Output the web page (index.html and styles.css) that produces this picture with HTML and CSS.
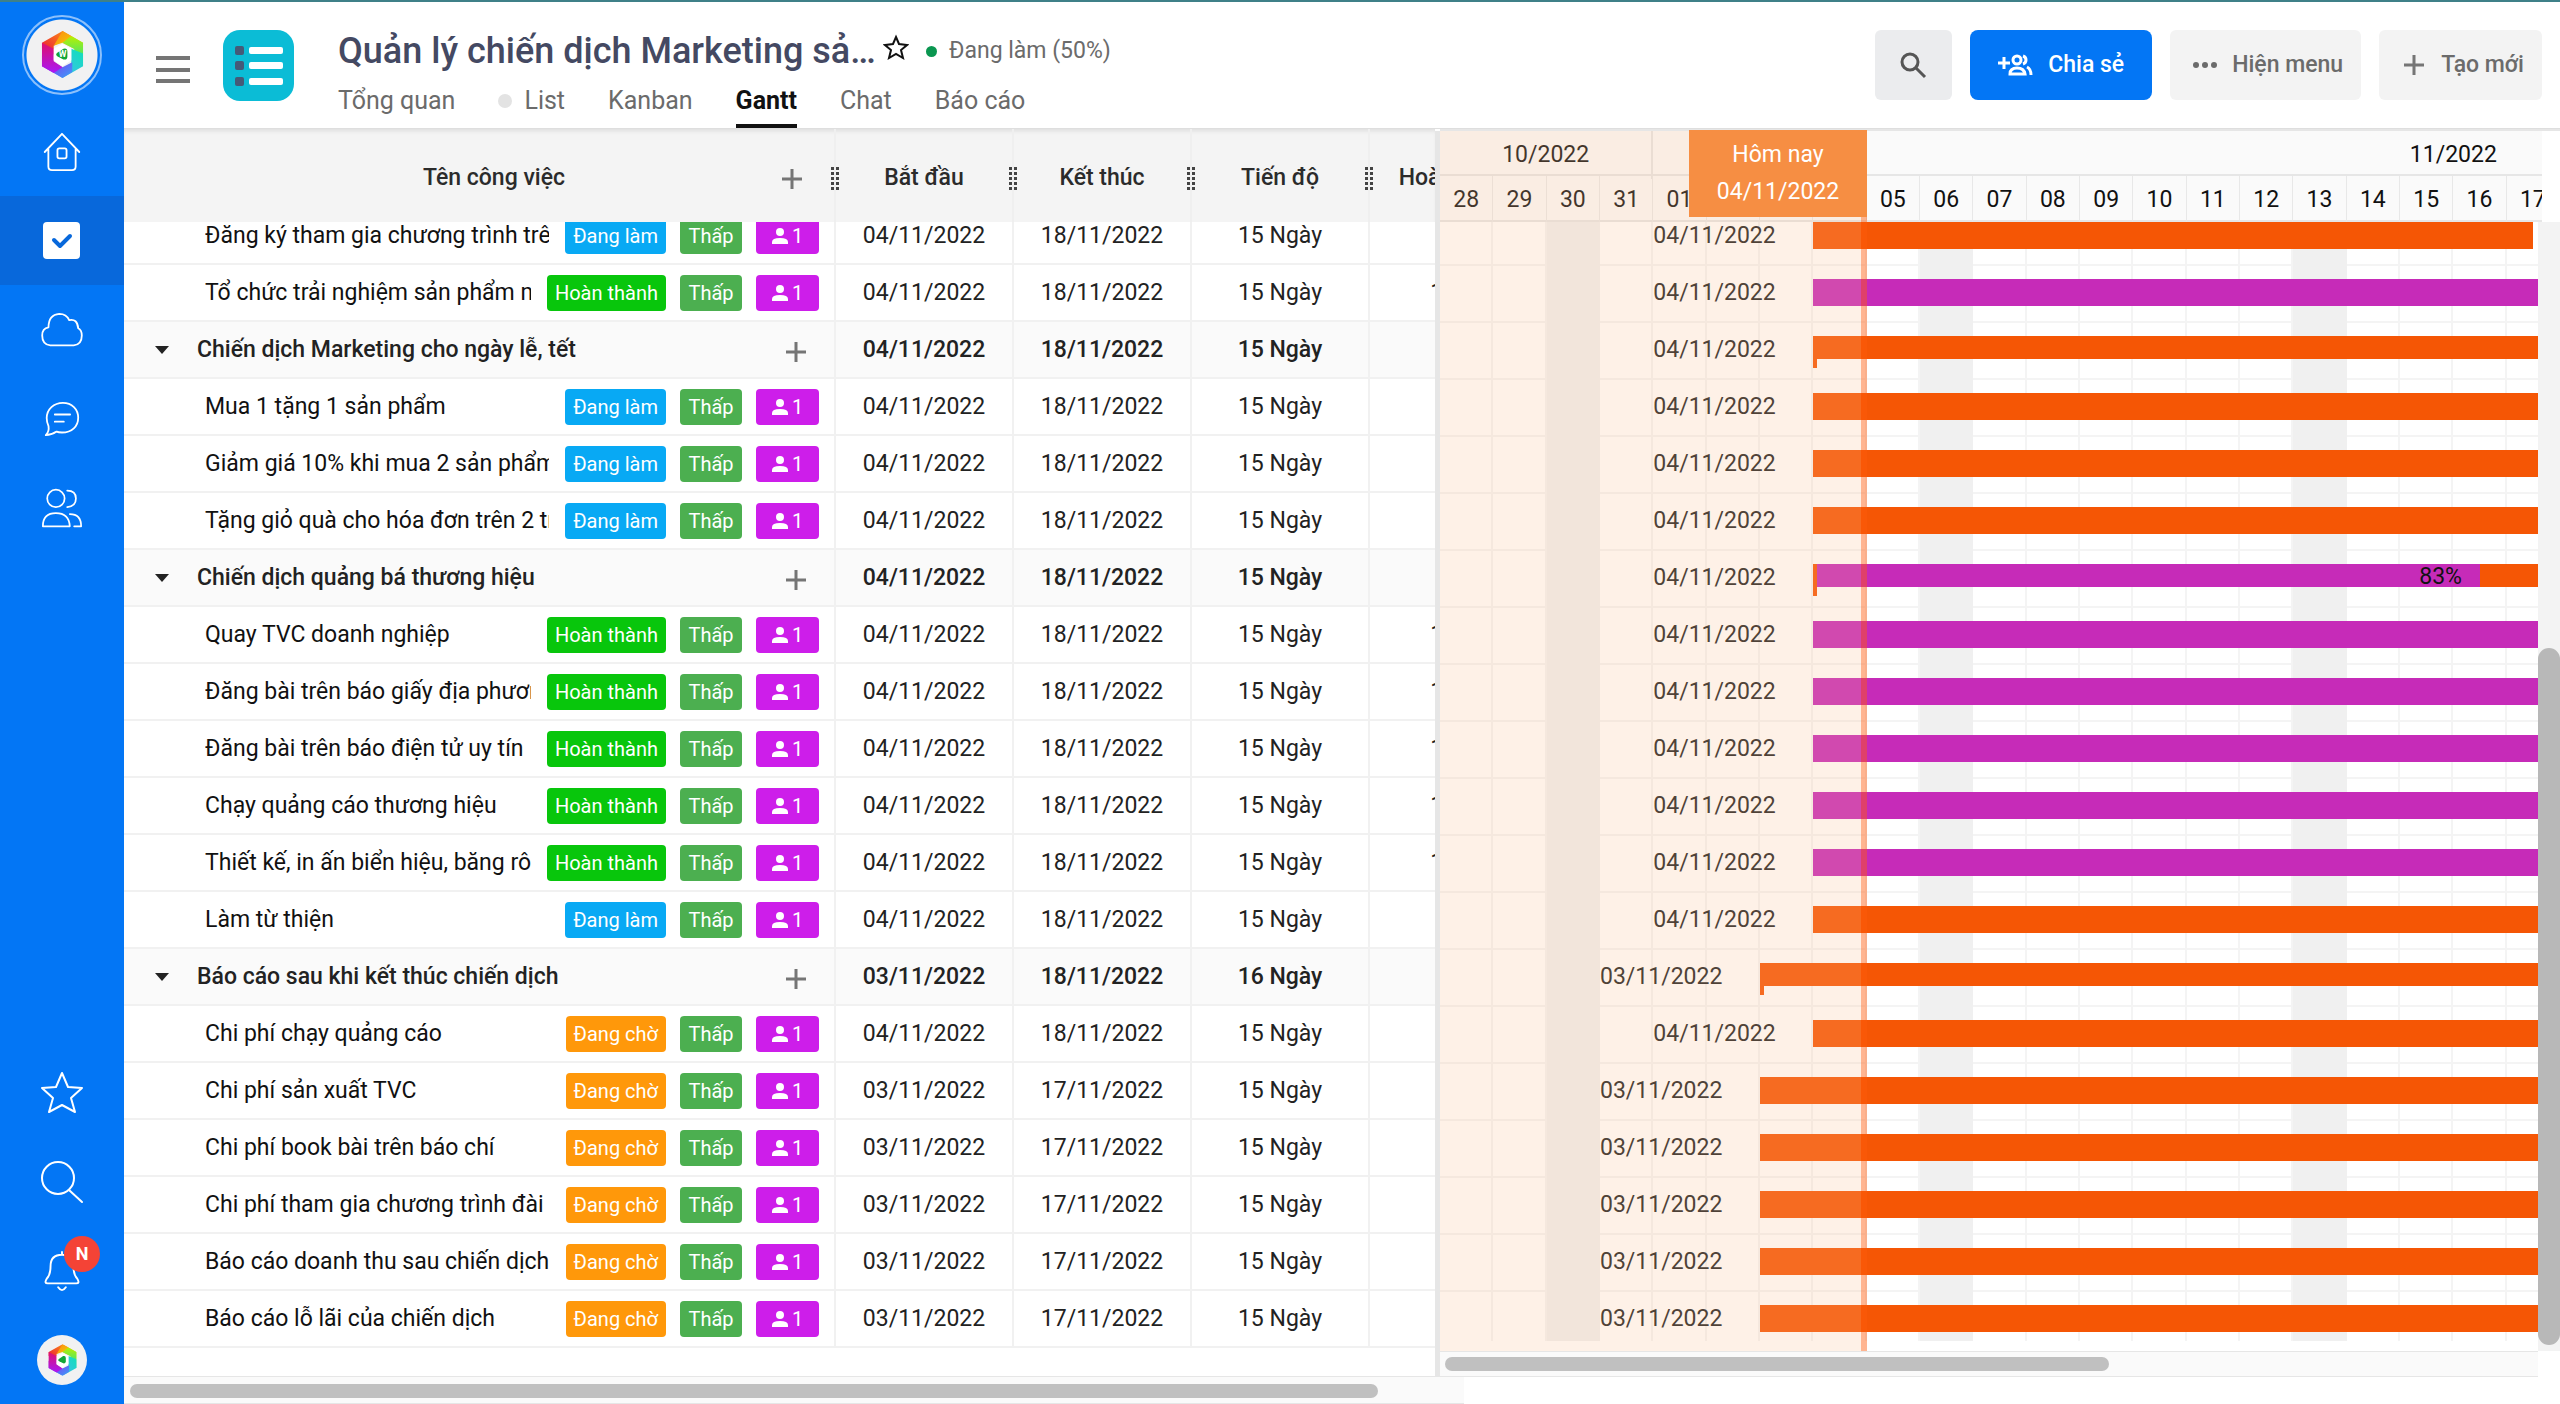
FILE: index.html
```html
<!DOCTYPE html>
<html lang="vi">
<head>
<meta charset="utf-8">
<title>Quản lý chiến dịch Marketing - Gantt</title>
<meta name="viewport" content="width=device-width, initial-scale=1">
<link rel="stylesheet" href="styles.css">
</head>
<body>
<svg class="sprite" aria-hidden="true">
  <defs>
    <linearGradient id="g1" x1="0" y1="1" x2="1" y2="0"><stop offset="0" stop-color="#e8123a"/><stop offset="1" stop-color="#ff9a10"/></linearGradient>
    <linearGradient id="g2" x1="0" y1="0" x2="1" y2="1"><stop offset="0" stop-color="#ff8a10"/><stop offset="1" stop-color="#e6f000"/></linearGradient>
    <linearGradient id="g3" x1="0" y1="0" x2="0" y2="1"><stop offset="0" stop-color="#b8f000"/><stop offset="1" stop-color="#14e0a0"/></linearGradient>
    <linearGradient id="g4" x1="1" y1="0" x2="0" y2="1"><stop offset="0" stop-color="#10e0b8"/><stop offset="1" stop-color="#48b8f8"/></linearGradient>
    <linearGradient id="g5" x1="1" y1="1" x2="0" y2="0"><stop offset="0" stop-color="#38a0f8"/><stop offset="1" stop-color="#a010f0"/></linearGradient>
    <linearGradient id="g6" x1="0" y1="1" x2="0" y2="0"><stop offset="0" stop-color="#a818f8"/><stop offset="1" stop-color="#e0106a"/></linearGradient>
  </defs>
  <symbol id="i-logo" viewBox="0 0 44 48">
    <path fill="url(#g1)" d="M1 12 22 0l9 5-18 10v9L1 18z"/>
    <path fill="url(#g2)" d="M22 0l21 12v11L22 12l-9 3z"/>
    <path fill="url(#g3)" d="M43 12v24l-9-5V18L22 12l9-7z"/>
    <path fill="url(#g4)" d="M43 23v13L22 48l-8-5 17-10V18z"/>
    <path fill="url(#g5)" d="M22 48 1 36V25l21 12 10-5v10z"/>
    <path fill="url(#g6)" d="M1 36V12l12 6v13l9 6-9 6z"/>
    <path fill="#fff" d="M22 13l9 5v12l-9 6-9-6V18z"/>
    <path fill="#12a637" d="M17 22l6-4q4-1 4 3v5q0 4-4 3l-6-3q-3-2 0-4z"/>
  </symbol>
  <symbol id="i-home" viewBox="0 0 42 44"><path d="M2 22 21 2l19 20M6 19v19q0 4 4 4h22q4 0 4-4V19"/><rect x="16" y="18" width="10" height="11" rx="2"/></symbol>
  <symbol id="i-cloud" viewBox="0 0 48 40"><path d="M11 37q-9-1-9-11 0-8 7-9 0-14 12-15 8 0 11 7 9-2 10 9 4 2 4 8 0 10-9 11z"/></symbol>
  <symbol id="i-chat" viewBox="0 0 40 40"><path d="M21 2C31 2 38 9 38 18.500S31 35 20 35q-4 0-6-1-6 4-12 4 4-4 3-10-2-4-2-9C3 9 11 2 21 2zM12 15h17M12 23h10"/></symbol>
  <symbol id="i-people" viewBox="0 0 48 46"><circle cx="17" cy="12" r="10"/><path d="M30 3q10 0 10 9t-10 10M2 44q0-15 15-15t16 15zM33 30q13 0 13 14h-8"/></symbol>
  <symbol id="i-starline" viewBox="0 0 44 44"><path d="M22 2l6 14 14 1-11 10 4 14-13-7-13 7 4-14L2 17l14-1z"/></symbol>
  <symbol id="i-search" viewBox="0 0 44 44"><circle cx="18" cy="18" r="16"/><path d="M29 30l13 12"/></symbol>
  <symbol id="i-bell" viewBox="0 0 38 44"><path d="M19 2v3M19 5q12 0 12 12 0 9 4 13 3 5-1 5H4q-4 0-1-5 4-4 4-13Q7 5 19 5zM15 39q4 6 8 0"/></symbol>
  <symbol id="i-person" viewBox="0 0 16 16"><circle cx="8" cy="4" r="4"/><path d="M0 16v-2q0-4 8-4t8 4v2z"/></symbol>
  <symbol id="i-plus" viewBox="0 0 20 20"><path d="M10 0v20M0 10h20"/></symbol>
  <symbol id="i-grip" viewBox="0 0 8 23"><path d="M0 1.500h3m2 0h3M0 6.500h3m2 0h3M0 11.500h3m2 0h3M0 16.500h3m2 0h3M0 21.500h3m2 0h3"/></symbol>
</svg>

<div class="app">
  <nav class="sidebar" aria-label="Chính">
    <div class="side-group">
      <a class="workspace" href="#" aria-label="Không gian làm việc"><span class="logo-disc"><svg class="logo" viewBox="0 0 44 48"><use href="#i-logo"/><text x="22" y="27" class="logo-letter" text-anchor="middle">W</text></svg></span></a>
      <a class="side-item" href="#" aria-label="Trang chủ"><svg class="line-icon" width="42" height="40"><use href="#i-home"/></svg></a>
      <a class="side-item active" href="#" aria-label="Công việc"><svg width="38" height="38" viewBox="0 0 38 38"><rect width="37" height="37" rx="4" fill="#fff"/><path d="M11 18l6 6 10-10" fill="none" stroke="#0868db" stroke-width="4" stroke-linecap="round" stroke-linejoin="round"/></svg></a>
      <a class="side-item" href="#" aria-label="Tài liệu"><svg class="line-icon" width="48" height="36"><use href="#i-cloud"/></svg></a>
      <a class="side-item" href="#" aria-label="Trò chuyện"><svg class="line-icon" width="40" height="36"><use href="#i-chat"/></svg></a>
      <a class="side-item" href="#" aria-label="Thành viên"><svg class="line-icon" width="48" height="40"><use href="#i-people"/></svg></a>
    </div>
    <div class="side-group">
      <a class="side-item" href="#" aria-label="Yêu thích"><svg class="line-icon" width="44" height="44"><use href="#i-starline"/></svg></a>
      <a class="side-item" href="#" aria-label="Tìm kiếm"><svg class="line-icon" width="44" height="44"><use href="#i-search"/></svg></a>
      <a class="side-item" href="#" aria-label="Thông báo"><svg class="line-icon" width="38" height="42"><use href="#i-bell"/></svg><span class="badge">N</span></a>
      <a class="side-item" href="#" aria-label="Tài khoản"><span class="logo-disc small"><svg class="logo" viewBox="0 0 44 48"><use href="#i-logo"/></svg></span></a>
    </div>
  </nav>

  <main class="main">
    <header class="topbar">
      <button class="menu-btn" type="button" aria-label="Menu"><svg width="34" height="28" viewBox="0 0 34 28" fill="#757575"><path d="M0 0h34v4H0zM0 12h34v4H0zM0 23h34v4H0z"/></svg></button>
      <svg class="project-icon" width="71" height="71" viewBox="0 0 71 71"><rect width="71" height="71" rx="17" fill="#0bbcd6"/><g fill="#455a78"><rect x="12" y="16" width="9" height="9" rx="2"/><rect x="12" y="31" width="9" height="9" rx="2"/><rect x="12" y="47" width="9" height="9" rx="2"/></g><g fill="#fff"><rect x="26" y="17" width="34" height="7" rx="2"/><rect x="26" y="32" width="34" height="7" rx="2"/><rect x="26" y="48" width="34" height="7" rx="2"/></g></svg>
      <div class="heading">
        <div class="title-row">
          <h1 class="title">Quản lý chiến dịch Marketing sản phẩm</h1>
          <button class="fav" type="button" aria-label="Đánh dấu"><svg width="26" height="26" viewBox="0 0 26 26" fill="none" stroke="#111" stroke-width="2"><path d="M13 3l3 7 8 1-6 5 2 8-7-4-7 4 2-8-6-5 8-1z"/></svg></button>
          <span class="status"><i class="status-dot"></i>Đang làm (50%)</span>
        </div>
        <nav class="tabs" aria-label="Chế độ xem">
          <a class="tab" href="#">Tổng quan</a>
          <a class="tab with-dot" href="#"><i class="tab-dot"></i>List</a>
          <a class="tab" href="#">Kanban</a>
          <a class="tab current" href="#" aria-current="page">Gantt</a>
          <a class="tab" href="#">Chat</a>
          <a class="tab" href="#">Báo cáo</a>
        </nav>
      </div>
      <div class="actions">
        <button class="btn btn-search" type="button" aria-label="Tìm"><svg width="27" height="27" viewBox="0 0 27 27" fill="none" stroke="#555" stroke-width="3"><circle cx="10" cy="10" r="8"/><path d="M16 16l9 9"/></svg></button>
        <button class="btn btn-primary" type="button"><svg width="35" height="22" viewBox="0 0 35 22" fill="none" stroke="#fff" stroke-width="3"><path d="M6 3v12M0 9h12"/><circle cx="19" cy="6" r="4"/><path d="M12 20q0-6 7-6t8 6zM25 2q3 1 3 4t-3 4M29 13q4 2 4 8"/></svg>Chia sẻ</button>
        <button class="btn" type="button"><svg width="24" height="6" viewBox="0 0 24 6" fill="#6b6b6b"><circle cx="3" cy="3" r="3"/><circle cx="12" cy="3" r="3"/><circle cx="21" cy="3" r="3"/></svg>Hiện menu</button>
        <button class="btn btn-new" type="button"><svg class="plus" width="20" height="20"><use href="#i-plus"/></svg>Tạo mới</button>
      </div>
    </header>

    <div class="gantt">
      <div class="grid-pane">
        <table class="tasks">
          <thead>
            <tr>
              <th class="name-head" scope="col"><span>Tên công việc</span><button class="add" type="button" aria-label="Thêm"><svg class="plus" width="20" height="20"><use href="#i-plus"/></svg></button><svg class="grip"><use href="#i-grip"/></svg></th>
              <th scope="col">Bắt đầu<svg class="grip"><use href="#i-grip"/></svg></th>
              <th scope="col">Kết thúc<svg class="grip"><use href="#i-grip"/></svg></th>
              <th scope="col">Tiến độ<svg class="grip"><use href="#i-grip"/></svg></th>
              <th scope="col">Hoàn thành</th>
            </tr>
          </thead>
          <tbody>
            <tr><td class="name"><span class="text">Đăng ký tham gia chương trình trên</span><span class="tag doing">Đang làm</span><span class="tag low">Thấp</span><span class="tag who"><svg width="16" height="16"><use href="#i-person"/></svg>1</span></td><td>04/11/2022</td><td>18/11/2022</td><td>15 Ngày</td><td></td></tr>
            <tr><td class="name"><span class="text">Tổ chức trải nghiệm sản phẩm mới</span><span class="tag done">Hoàn thành</span><span class="tag low">Thấp</span><span class="tag who"><svg width="16" height="16"><use href="#i-person"/></svg>1</span></td><td>04/11/2022</td><td>18/11/2022</td><td>15 Ngày</td><td>100%</td></tr>
            <tr class="group"><td class="name"><i class="caret"></i><span class="text">Chiến dịch Marketing cho ngày lễ, tết</span><button class="add" type="button" aria-label="Thêm"><svg class="plus" width="20" height="20"><use href="#i-plus"/></svg></button></td><td>04/11/2022</td><td>18/11/2022</td><td>15 Ngày</td><td></td></tr>
            <tr><td class="name"><span class="text">Mua 1 tặng 1 sản phẩm</span><span class="tag doing">Đang làm</span><span class="tag low">Thấp</span><span class="tag who"><svg width="16" height="16"><use href="#i-person"/></svg>1</span></td><td>04/11/2022</td><td>18/11/2022</td><td>15 Ngày</td><td></td></tr>
            <tr><td class="name"><span class="text">Giảm giá 10% khi mua 2 sản phẩm</span><span class="tag doing">Đang làm</span><span class="tag low">Thấp</span><span class="tag who"><svg width="16" height="16"><use href="#i-person"/></svg>1</span></td><td>04/11/2022</td><td>18/11/2022</td><td>15 Ngày</td><td></td></tr>
            <tr><td class="name"><span class="text">Tặng giỏ quà cho hóa đơn trên 2 triệu</span><span class="tag doing">Đang làm</span><span class="tag low">Thấp</span><span class="tag who"><svg width="16" height="16"><use href="#i-person"/></svg>1</span></td><td>04/11/2022</td><td>18/11/2022</td><td>15 Ngày</td><td></td></tr>
            <tr class="group"><td class="name"><i class="caret"></i><span class="text">Chiến dịch quảng bá thương hiệu</span><button class="add" type="button" aria-label="Thêm"><svg class="plus" width="20" height="20"><use href="#i-plus"/></svg></button></td><td>04/11/2022</td><td>18/11/2022</td><td>15 Ngày</td><td></td></tr>
            <tr><td class="name"><span class="text">Quay TVC doanh nghiệp</span><span class="tag done">Hoàn thành</span><span class="tag low">Thấp</span><span class="tag who"><svg width="16" height="16"><use href="#i-person"/></svg>1</span></td><td>04/11/2022</td><td>18/11/2022</td><td>15 Ngày</td><td>100%</td></tr>
            <tr><td class="name"><span class="text">Đăng bài trên báo giấy địa phương</span><span class="tag done">Hoàn thành</span><span class="tag low">Thấp</span><span class="tag who"><svg width="16" height="16"><use href="#i-person"/></svg>1</span></td><td>04/11/2022</td><td>18/11/2022</td><td>15 Ngày</td><td>100%</td></tr>
            <tr><td class="name"><span class="text">Đăng bài trên báo điện tử uy tín</span><span class="tag done">Hoàn thành</span><span class="tag low">Thấp</span><span class="tag who"><svg width="16" height="16"><use href="#i-person"/></svg>1</span></td><td>04/11/2022</td><td>18/11/2022</td><td>15 Ngày</td><td>100%</td></tr>
            <tr><td class="name"><span class="text">Chạy quảng cáo thương hiệu</span><span class="tag done">Hoàn thành</span><span class="tag low">Thấp</span><span class="tag who"><svg width="16" height="16"><use href="#i-person"/></svg>1</span></td><td>04/11/2022</td><td>18/11/2022</td><td>15 Ngày</td><td>100%</td></tr>
            <tr><td class="name"><span class="text">Thiết kế, in ấn biển hiệu, băng rôn</span><span class="tag done">Hoàn thành</span><span class="tag low">Thấp</span><span class="tag who"><svg width="16" height="16"><use href="#i-person"/></svg>1</span></td><td>04/11/2022</td><td>18/11/2022</td><td>15 Ngày</td><td>100%</td></tr>
            <tr><td class="name"><span class="text">Làm từ thiện</span><span class="tag doing">Đang làm</span><span class="tag low">Thấp</span><span class="tag who"><svg width="16" height="16"><use href="#i-person"/></svg>1</span></td><td>04/11/2022</td><td>18/11/2022</td><td>15 Ngày</td><td></td></tr>
            <tr class="group"><td class="name"><i class="caret"></i><span class="text">Báo cáo sau khi kết thúc chiến dịch</span><button class="add" type="button" aria-label="Thêm"><svg class="plus" width="20" height="20"><use href="#i-plus"/></svg></button></td><td>03/11/2022</td><td>18/11/2022</td><td>16 Ngày</td><td></td></tr>
            <tr><td class="name"><span class="text">Chi phí chạy quảng cáo</span><span class="tag waiting">Đang chờ</span><span class="tag low">Thấp</span><span class="tag who"><svg width="16" height="16"><use href="#i-person"/></svg>1</span></td><td>04/11/2022</td><td>18/11/2022</td><td>15 Ngày</td><td></td></tr>
            <tr><td class="name"><span class="text">Chi phí sản xuất TVC</span><span class="tag waiting">Đang chờ</span><span class="tag low">Thấp</span><span class="tag who"><svg width="16" height="16"><use href="#i-person"/></svg>1</span></td><td>03/11/2022</td><td>17/11/2022</td><td>15 Ngày</td><td></td></tr>
            <tr><td class="name"><span class="text">Chi phí book bài trên báo chí</span><span class="tag waiting">Đang chờ</span><span class="tag low">Thấp</span><span class="tag who"><svg width="16" height="16"><use href="#i-person"/></svg>1</span></td><td>03/11/2022</td><td>17/11/2022</td><td>15 Ngày</td><td></td></tr>
            <tr><td class="name"><span class="text">Chi phí tham gia chương trình đài</span><span class="tag waiting">Đang chờ</span><span class="tag low">Thấp</span><span class="tag who"><svg width="16" height="16"><use href="#i-person"/></svg>1</span></td><td>03/11/2022</td><td>17/11/2022</td><td>15 Ngày</td><td></td></tr>
            <tr><td class="name"><span class="text">Báo cáo doanh thu sau chiến dịch</span><span class="tag waiting">Đang chờ</span><span class="tag low">Thấp</span><span class="tag who"><svg width="16" height="16"><use href="#i-person"/></svg>1</span></td><td>03/11/2022</td><td>17/11/2022</td><td>15 Ngày</td><td></td></tr>
            <tr><td class="name"><span class="text">Báo cáo lỗ lãi của chiến dịch</span><span class="tag waiting">Đang chờ</span><span class="tag low">Thấp</span><span class="tag who"><svg width="16" height="16"><use href="#i-person"/></svg>1</span></td><td>03/11/2022</td><td>17/11/2022</td><td>15 Ngày</td><td></td></tr>
          </tbody>
        </table>
      </div>

      <div class="divider"></div>

      <section class="timeline" aria-label="Dòng thời gian">
        <div class="scale">
          <div class="canvas months"><span class="oct">10/2022</span><span class="nov">11/2022</span></div>
          <div class="canvas days"><span>28</span><span>29</span><span>30</span><span>31</span><span>01</span><span></span><span></span><span></span><span>05</span><span>06</span><span>07</span><span>08</span><span>09</span><span>10</span><span>11</span><span>12</span><span>13</span><span>14</span><span>15</span><span>16</span><span>17</span></div>
        </div>
        <div class="chart">
          <div class="viewport">
            <div class="canvas day-grid"><i></i><i></i><i class="off"></i><i></i><i></i><i></i><i></i><i></i><i></i><i class="off"></i><i></i><i></i><i></i><i></i><i></i><i></i><i class="off"></i><i></i><i></i><i></i><i></i></div>
            <div class="rows">
              <div class="canvas row"><span class="from">04/11/2022</span><div class="bar" style="width:90%"></div></div>
              <div class="canvas row"><span class="from">04/11/2022</span><div class="bar full"></div></div>
              <div class="canvas row"><span class="from">04/11/2022</span><div class="bar summary"></div></div>
              <div class="canvas row"><span class="from">04/11/2022</span><div class="bar"></div></div>
              <div class="canvas row"><span class="from">04/11/2022</span><div class="bar"></div></div>
              <div class="canvas row"><span class="from">04/11/2022</span><div class="bar"></div></div>
              <div class="canvas row"><span class="from">04/11/2022</span><div class="bar summary"><div class="progress" style="width:83.33%">83%</div></div></div>
              <div class="canvas row"><span class="from">04/11/2022</span><div class="bar full"></div></div>
              <div class="canvas row"><span class="from">04/11/2022</span><div class="bar full"></div></div>
              <div class="canvas row"><span class="from">04/11/2022</span><div class="bar full"></div></div>
              <div class="canvas row"><span class="from">04/11/2022</span><div class="bar full"></div></div>
              <div class="canvas row"><span class="from">04/11/2022</span><div class="bar full"></div></div>
              <div class="canvas row"><span class="from">04/11/2022</span><div class="bar"></div></div>
              <div class="canvas row early"><span class="from">03/11/2022</span><div class="bar summary"></div></div>
              <div class="canvas row"><span class="from">04/11/2022</span><div class="bar"></div></div>
              <div class="canvas row early"><span class="from">03/11/2022</span><div class="bar"></div></div>
              <div class="canvas row early"><span class="from">03/11/2022</span><div class="bar"></div></div>
              <div class="canvas row early"><span class="from">03/11/2022</span><div class="bar"></div></div>
              <div class="canvas row early"><span class="from">03/11/2022</span><div class="bar"></div></div>
              <div class="canvas row early"><span class="from">03/11/2022</span><div class="bar"></div></div>
            </div>
          </div>
          <div class="vscroll"><div class="vthumb"></div></div>
        </div>
        <div class="hscroll"><div class="hthumb"></div></div>
        <div class="past"><div class="today">Hôm nay<br>04/11/2022</div></div>
      </section>
    </div>
    <div class="pane-scroll"><div class="hthumb"></div></div>
  </main>
</div>
</body>
</html>
```
FILE: styles.css
```css
* { box-sizing: border-box; }

body {
  margin: 0;
  background: #fff;
  color: #222;
  font: 23px/28px Roboto, "Noto Sans", sans-serif;
}

button {
  border: 0;
  padding: 0;
  background: none;
  font: inherit;
  color: inherit;
  cursor: pointer;
}

a { color: inherit; text-decoration: none; }

svg { flex: none; display: block; }

.sprite { position: absolute; width: 0; height: 0; }

.app {
  display: flex;
  height: 100vh;
  border-top: 2px solid #3f8088;
}

/* Sidebar */
.sidebar {
  flex: 0 0 124px;
  display: flex;
  flex-direction: column;
  justify-content: space-between;
  background: #0376f5;
}

.workspace {
  display: flex;
  justify-content: center;
  align-items: center;
  height: 105px;
}

.logo-disc {
  display: flex;
  justify-content: center;
  align-items: center;
  width: 80px;
  height: 80px;
  border: 2px solid #8cc0fb;
  border-radius: 50%;
  background: radial-gradient(circle, #f1f1f2 35px, transparent 36px);
}

.logo-disc .logo { width: 43px; height: 47px; }

.logo-disc.small {
  width: 50px;
  height: 50px;
  border: 0;
  background: #f1f1f2;
}

.logo-disc.small .logo { width: 29px; height: 32px; }

.logo-letter { font: 700 9px/9px Roboto, sans-serif; fill: #fff; }

.side-item {
  position: relative;
  display: flex;
  justify-content: center;
  align-items: center;
  height: 89px;
}

.side-item.active { background: #0868db; }

.line-icon {
  fill: none;
  stroke: #fff;
  stroke-width: 2;
  stroke-linejoin: round;
  stroke-linecap: round;
}

.badge {
  position: absolute;
  top: 10px;
  left: 64px;
  width: 36px;
  border-radius: 50%;
  background: #f44336;
  color: #fff;
  font-size: 18px;
  line-height: 36px;
  font-weight: 700;
  text-align: center;
}

/* Header */
.main {
  flex: 1;
  min-width: 0;
  display: flex;
  flex-direction: column;
}

.topbar {
  flex: none;
  display: flex;
  align-items: center;
  height: 127px;
  padding: 0 18px 0 32px;
  border-bottom: 1px solid #dedede;
}

.menu-btn { padding-top: 10px; }

.project-icon { margin: 0 44px 0 33px; }

.heading {
  flex: 1;
  min-width: 0;
  align-self: stretch;
  display: flex;
  flex-direction: column;
  justify-content: flex-end;
}

.title-row {
  display: flex;
  align-items: center;
  height: 44px;
}

.title {
  margin: 0;
  width: 540px;
  overflow: hidden;
  text-overflow: ellipsis;
  white-space: nowrap;
  color: #444962;
  font-size: 36px;
  line-height: 44px;
  font-weight: 500;
}

.fav { margin: 0 17px 8px 5px; }

.status {
  display: flex;
  align-items: center;
  gap: 12px;
  color: #6b6b6b;
}

.status-dot {
  width: 11px;
  height: 11px;
  border-radius: 50%;
  background: #0a9650;
}

.tabs { display: flex; gap: 43px; }

.tab {
  display: flex;
  align-items: center;
  gap: 12px;
  height: 55px;
  border-bottom: 4px solid transparent;
  padding-top: 4px;
  color: #6b6b6b;
  font-size: 25px;
}

.tab.current {
  border-color: #111;
  color: #111;
  font-weight: 700;
}

.tab-dot {
  width: 14px;
  height: 14px;
  border-radius: 50%;
  background: #e3e3e3;
}

.actions { display: flex; gap: 18px; }

.btn {
  display: flex;
  justify-content: center;
  align-items: center;
  gap: 15px;
  height: 70px;
  padding: 0 18px 0 23px;
  border-radius: 6px;
  background: #f3f3f3;
  color: #6b6b6b;
  font-weight: 500;
}

.btn-search { width: 77px; padding: 0; background: #ebecee; }

.btn-primary {
  padding: 0 28px;
  border-radius: 8px;
  background: #0376f5;
  color: #fff;
}

.btn-new { gap: 17px; padding-left: 25px; }

.plus { fill: none; stroke: #757575; stroke-width: 3; }

/* Gantt */
.gantt {
  flex: 1;
  min-height: 0;
  display: grid;
  grid-template-columns: minmax(0, 1311fr) 5px minmax(0, 1120fr);
}

.grid-pane {
  min-height: 0;
  overflow: hidden;
  border-bottom: 1px solid #e6e6e6;
}

.divider { margin-top: 2px; background: #e6e6e6; }

.tasks { display: block; }

.tasks thead {
  display: block;
  position: relative;
  z-index: 1;
}

.tasks tbody { display: block; margin-top: -14px; }

.tasks tr {
  display: grid;
  grid-template-columns: 712px repeat(4, 178px);
  height: 57px;
  background: #fff;
}

.tasks thead tr {
  height: 93px;
  background: #f4f4f4;
  box-shadow: inset 0 4px 4px -2px #dedede;
}

.tasks tr.group { background: #fafafa; color: #222; font-weight: 500; }

.tasks th,
.tasks td {
  display: flex;
  justify-content: center;
  align-items: center;
  padding: 1px 0 0;
  border-right: 2px solid #f1f1f1;
  border-bottom: 2px solid #f1f1f1;
  white-space: nowrap;
}

.tasks th {
  position: relative;
  padding-top: 4px;
  border-color: #efefef;
  border-bottom: 0;
  color: #2b2b2b;
  font-weight: 500;
}

.tasks .name-head { padding-left: 30px; }

.name-head .add { position: absolute; right: 32px; top: 40px; }

.grip {
  position: absolute;
  right: -5px;
  top: 38px;
  z-index: 1;
  width: 8px;
  height: 23px;
  stroke: #444;
  stroke-width: 3;
}

.tasks td.name {
  justify-content: flex-start;
  gap: 14px;
  padding: 1px 15px 0 81px;
  color: #111;
}

.tasks .group td.name { gap: 28px; padding: 1px 28px 0 31px; color: #222; }

.tasks .group .add { padding-top: 4px; }

.text {
  flex: 1;
  min-width: 0;
  margin-right: 2px;
  overflow: hidden;
}

.caret {
  border: 7px solid transparent;
  border-top: 8px solid #222;
  border-bottom: 0;
}

.tag {
  flex: none;
  display: flex;
  justify-content: center;
  align-items: center;
  height: 36px;
  padding: 0 8px;
  border-radius: 4px;
  color: #fff;
  font-size: 20px;
}

.doing { background: #08a9f4; }
.done { background: #08c60c; }
.waiting { background: #ff980a; }
.low { width: 62px; background: #4caf50; }
.who { width: 63px; gap: 4px; background: #cd1eea; fill: #fff; }

/* Timeline */
.timeline {
  position: relative;
  min-height: 0;
  display: flex;
  flex-direction: column;
  border-top: 2px solid #e6e6e6;
}

.scale {
  flex: none;
  height: 91px;
  margin-right: 18px;
  overflow: hidden;
  background: #fafafa;
  color: #111;
}

.canvas {
  display: grid;
  grid-template-columns: repeat(36, 1fr);
  width: 1920px;
}

.months,
.days {
  height: 45px;
  border-bottom: 2px solid #e6e6e6;
  line-height: 48px;
  text-align: center;
}

.oct { grid-column: span 4; border-right: 2px solid #e6e6e6; }
.nov { grid-column: span 30; }

.days { height: 46px; }
.days span { border-right: 1px solid #e8e8e8; }

.chart {
  flex: 1;
  min-height: 0;
  display: flex;
}

.viewport {
  flex: 1;
  min-width: 0;
  display: grid;
  grid-template-columns: minmax(0, 1fr);
  overflow: hidden;
}

.day-grid {
  grid-area: 1 / 1;
  margin: -13px 0 10px;
  background: linear-gradient(transparent 55px, #f4f4f4 55px) 0 0 / 100% 57px;
}

.day-grid i { border-right: 2px solid #f4f4f4; }
.day-grid .off { background: #f0f0f0; border-color: #f0f0f0; }

.rows {
  grid-area: 1 / 1;
  min-height: 0;
  margin-top: -14px;
}

.row { height: 57px; padding-top: 14px; align-content: start; }

.from { grid-column: 5 / span 3; line-height: 27px; }
.early .from { grid-column: 4 / span 3; }

.bar {
  grid-column: 8 / span 15;
  position: relative;
  height: 27px;
  background: #f55605;
}

.early .bar { grid-column: 7 / span 15; }

.bar.full { background: #c62bb8; }

.bar.summary { height: 23px; }

/* Tick hanging from the start of a summary bar */
.bar.summary::before {
  content: "";
  position: absolute;
  left: 0;
  top: 0;
  width: 4px;
  height: 32px;
  background: inherit;
}

.progress {
  height: 23px;
  padding-right: 18px;
  background: #c62bb8;
  color: #111;
  line-height: 25px;
  text-align: right;
}

.vscroll {
  flex: 0 0 22px;
  padding-top: 426px;
  background: #f3f3f3;
}

.vthumb { height: 697px; border-radius: 11px; background: #b8b8b8; }

.hscroll {
  flex: none;
  height: 26px;
  margin-right: 22px;
  padding: 5px;
  border-top: 1px solid #e6e6e6;
  border-bottom: 1px solid #e6e6e6;
  background: #fafafa;
}

.hthumb { height: 14px; border-radius: 7px; background: #c0c0c0; }

.hscroll .hthumb { width: 61%; }

.past {
  position: absolute;
  top: 0;
  bottom: 26px;
  left: 0;
  width: 427px;
  border-right: 6px solid rgba(255, 90, 10, 0.45);
  background: rgba(252, 190, 143, 0.21) padding-box;
}

.today {
  position: absolute;
  top: -1px;
  right: -6px;
  width: 178px;
  height: 87px;
  padding-top: 6px;
  background: #f68e43;
  color: #fff;
  line-height: 37px;
  text-align: center;
}

.pane-scroll {
  flex: none;
  width: 55%;
  height: 27px;
  padding: 7px 6px;
  border-bottom: 1px solid #e6e6e6;
  background: #fafafa;
}

.pane-scroll .hthumb { width: 94%; }
```
